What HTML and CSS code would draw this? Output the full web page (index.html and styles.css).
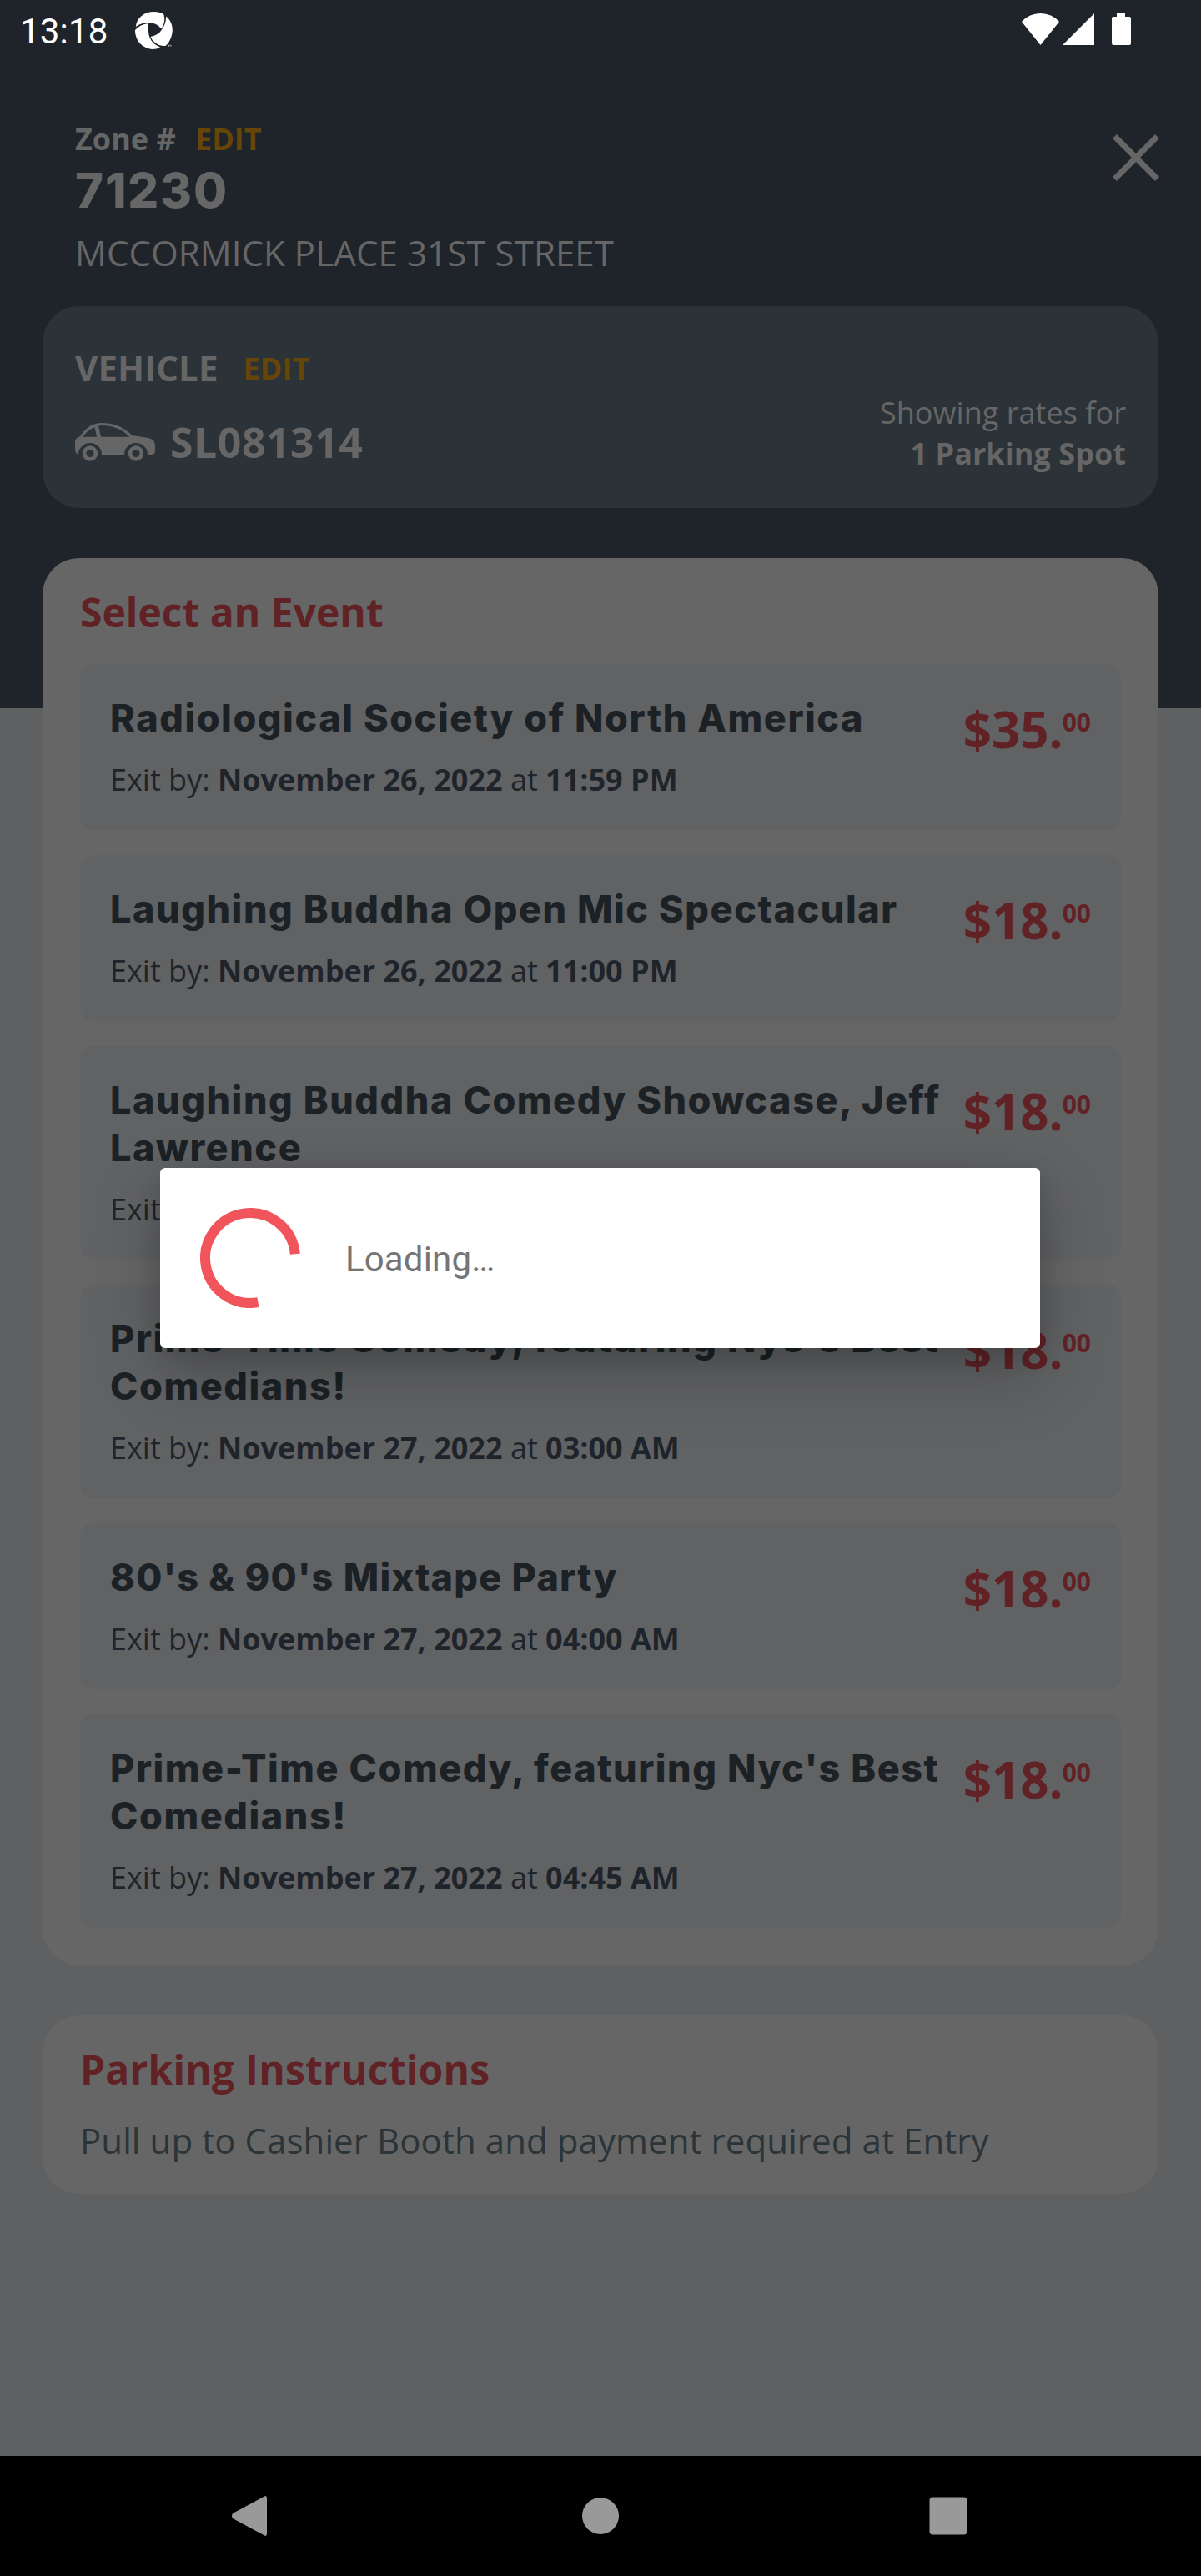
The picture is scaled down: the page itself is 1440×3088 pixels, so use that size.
FILE: index.html
```html
<!DOCTYPE html>
<html lang="en">
<head>
<meta charset="utf-8">
<title>Select an Event</title>
<link rel="stylesheet" href="styles.css">
</head>
<body>
<div class="screen">
  <div class="status">
    <span class="clock">13:18</span>
    <svg class="app-logo" viewBox="0 0 45 45"><path fill="#fff" d="M22.500 0C28 0 32 1.500 34.500 3.500Q37 12 31.500 20.500Q26 13 16 13Q8 13 .8 18C2 7 11 0 22.500 0ZM37 5.500C43 10 45 17 44.800 23C44 31 41 37 36.500 41Q29 41.500 24 37Q19.500 33.500 18.500 30Q28 28 31.800 21.700Q37.500 14 37 5.500ZM16 14Q15 24 17.500 31Q21 39 30 42.500Q26 45 21 45C9 44 0 35 0 22Q6 15 16 14Z"/><path d="M39.500 40.300h3.500M40.500 40v2M43 40v2" stroke="#aaa" stroke-width=".8"/></svg>
    <svg class="sys" viewBox="0 0 131 40"><path fill="#fff" d="M0 11Q9 1 22.500 1T45 11L22.500 39ZM87 1V39H49ZM114 1h10v4h5q2 0 2 2v30q0 2-2 2h-19q-2 0-2-2V7q0-2 2-2h4z"/></svg>
  </div>
  <header class="zone">
    <div>
      <div class="zone-label">Zone # <span class="edit">EDIT</span></div>
      <div class="zone-number">71230</div>
      <div class="zone-name">MCCORMICK PLACE 31ST STREET</div>
    </div>
    <svg class="close" viewBox="0 0 56 56"><path d="M2.500 2.500L53.500 53.500M53.500 2.500L2.500 53.500" stroke="#666" stroke-width="7"/></svg>
  </header>
  <section class="vehicle">
    <div>
      <div class="vehicle-label">VEHICLE <span class="edit">EDIT</span></div>
      <div class="plate">
        <svg class="car" viewBox="0 0 96 46" fill="#666">
          <path fill-rule="evenodd" d="M6 16.300C13 5 22 0 32 0C47 0 58 5 68.500 15L88 18Q96 20.500 96 27V34Q96 38 91.500 38H87A14 14 0 0 0 59 38H32A14 14 0 0 0 4 38Q0 36 0 32V23Q0 18 6 16.300ZM9.500 16.700H26L23.500 5.200Q15 8.500 9.500 16.700ZM28 3.500L31 16.700H65.300Q52 3 32 3Z"/>
          <circle cx="18" cy="36.500" r="6.900" fill="none" stroke="#666" stroke-width="4.600"/>
          <circle cx="73" cy="36.500" r="6.900" fill="none" stroke="#666" stroke-width="4.600"/>
        </svg>
        <span>SL081314</span>
      </div>
    </div>
    <div class="rates">Showing rates for<br><b>1 Parking Spot</b></div>
  </section>
  <section class="card events">
    <h2>Select an Event</h2>
    <article class="event"><div><h3>Radiological Society of North America</h3><p>Exit by: <b>November 26, 2022</b> at <b>11:59 PM</b></p></div><div class="price">$35.<span class="cents">00</span></div></article>
    <article class="event"><div><h3>Laughing Buddha Open Mic Spectacular</h3><p>Exit by: <b>November 26, 2022</b> at <b>11:00 PM</b></p></div><div class="price">$18.<span class="cents">00</span></div></article>
    <article class="event"><div><h3>Laughing Buddha Comedy Showcase, Jeff<br>Lawrence</h3><p>Exit by: <b>November 27, 2022</b> at <b>02:00 AM</b></p></div><div class="price">$18.<span class="cents">00</span></div></article>
    <article class="event"><div><h3>Prime-Time Comedy, featuring Nyc's Best<br>Comedians!</h3><p>Exit by: <b>November 27, 2022</b> at <b>03:00 AM</b></p></div><div class="price">$18.<span class="cents">00</span></div></article>
    <article class="event"><div><h3 class="numeric">80's &amp; 90's Mixtape Party</h3><p>Exit by: <b>November 27, 2022</b> at <b>04:00 AM</b></p></div><div class="price">$18.<span class="cents">00</span></div></article>
    <article class="event"><div><h3>Prime-Time Comedy, featuring Nyc's Best<br>Comedians!</h3><p>Exit by: <b>November 27, 2022</b> at <b>04:45 AM</b></p></div><div class="price">$18.<span class="cents">00</span></div></article>
  </section>
  <section class="card instructions">
    <h2>Parking Instructions</h2>
    <p>Pull up to Cashier Booth and payment required at Entry</p>
  </section>
  <nav class="navbar">
    <svg class="nav-icon" viewBox="0 0 48 48"><path fill="#999" d="M43 0Q45 0 45 3V45Q45 48 43 48L4 27Q2 24 4 21Z"/></svg>
    <svg class="nav-icon" viewBox="0 0 48 48"><circle cx="24" cy="24" r="22" fill="#999"/></svg>
    <svg class="nav-icon" viewBox="0 0 48 48"><rect x="1.500" y="1.500" width="45" height="45" rx="4" fill="#999"/></svg>
  </nav>
  <div class="dialog">
    <svg class="spinner" viewBox="0 0 120 120"><path d="M113.800 55.300A54 54 0 1 0 69.400 113.200" fill="none" stroke="#f2545b" stroke-width="12"/></svg>
    <span>Loading…</span>
  </div>
</div>
</body>
</html>
```
FILE: styles.css
```css
* { box-sizing: border-box; }
body, h2, h3, p { margin: 0; }
.screen {
  position: relative;
  width: 1440px;
  height: 3088px;
  display: flex;
  flex-direction: column;
  background: linear-gradient(#1f242b 849px, #5f6062 849px);
  font-family: "Open Sans", sans-serif;
  color: #666;
}
.status { height: 75px; padding: 14px 84px 0 24px; display: flex; align-items: flex-start; }
.clock { font: 42px/46px Roboto, sans-serif; letter-spacing: .2px; color: #fff; width: 138px; padding-top: 1px; }
.app-logo { width: 45px; height: 45px; }
.sys { width: 131px; height: 40px; margin: 1px 0 0 auto; }
.zone { height: 292px; padding: 66px 50px 0 90px; display: flex; justify-content: space-between; }
.close { width: 56px; height: 56px; margin-top: 20px; }
.zone-label { font-size: 36px; line-height: 52px; font-weight: 700; }
.edit { font-size: 36px; color: #664508; margin-left: 14px; }
.zone-number { font: 800 58px/66px Inter, sans-serif; letter-spacing: 1.8px; padding-top: 2px; }
.zone-name { font-size: 42px; line-height: 60px; margin-top: 12px; letter-spacing: .1px; }
.vehicle {
  height: 242px;
  margin: 0 51px;
  padding: 45px 39px 0;
  border-radius: 44px;
  background: #2b3238;
  display: flex;
  justify-content: space-between;
}
.vehicle-label { font-size: 42px; line-height: 58px; font-weight: 700; letter-spacing: .1px; }
.vehicle-label .edit { margin-left: 19px; line-height: 40px; vertical-align: 2px; }
.plate { display: flex; align-items: center; gap: 18px; margin-top: 26px; font-size: 50px; line-height: 68px; font-weight: 700; letter-spacing: .5px; }
.car { width: 96px; height: 46px; }
.rates { font-size: 36px; line-height: 49px; text-align: right; padding-top: 58px; letter-spacing: .05px; }
.card { margin: 60px 51px 0; padding: 32px 45px 45px; border-radius: 44px; background: #666; }
.card h2 { font-size: 48px; line-height: 65px; font-weight: 700; color: #612226; }
.event {
  display: flex;
  justify-content: space-between;
  padding: 36px 36px 36px;
  margin-top: 30px;
  border-radius: 16px;
  background: #616264;
}
.event h3 { font: 800 45px/57px Inter, sans-serif; letter-spacing: 1.55px; color: #1b2124; white-space: nowrap; }
.event h3.numeric { letter-spacing: 1.25px; }
.event p { font-size: 36px; line-height: 49px; margin-top: 21px; color: #1f242b; }
.price { display: flex; font-size: 60px; line-height: 84px; font-weight: 700; color: #612226; }
.cents { font-size: 30px; line-height: 68px; margin-left: -1px; }
.instructions { height: 214px; }
.instructions h2 { letter-spacing: .2px; }
.instructions p { font-size: 42px; line-height: 57px; margin-top: 24px; letter-spacing: .08px; color: #2b3438; }
.navbar { height: 144px; margin-top: auto; background: #000; display: flex; justify-content: space-between; align-items: center; padding: 0 279px 0 275px; }
.nav-icon { width: 48px; height: 48px; }
.nav-icon:nth-child(2) { margin-left: 4px; }
.dialog {
  position: absolute;
  left: 192px;
  top: 1400px;
  width: 1055px;
  height: 216px;
  padding-left: 48px;
  display: flex;
  align-items: center;
  gap: 54px;
  background: #fff;
  border-radius: 6px;
  box-shadow: 0 32px 80px rgba(0,0,0,.22), 0 8px 30px rgba(0,0,0,.12);
  font: 42px/50px Roboto, sans-serif;
  letter-spacing: .15px;
  color: #757575;
}
.dialog span { padding-top: 3px; }
.spinner { width: 120px; height: 120px; }
```
